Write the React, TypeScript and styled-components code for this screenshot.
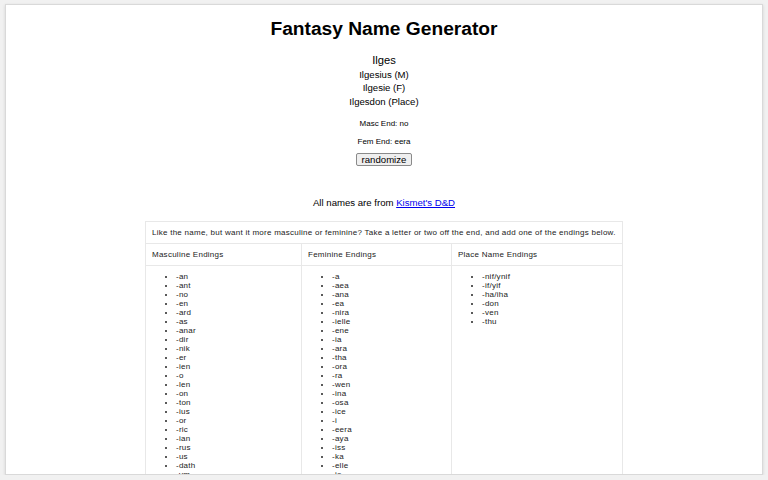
import React from "react";
import styled, { createGlobalStyle } from "styled-components";

const GlobalStyle = createGlobalStyle`
  html, body {
    margin: 0;
    padding: 0;
    background: #f1f1f1;
    font-family: "Liberation Sans", Arial, sans-serif;
    color: #000;
  }
`;

const Page = styled.div`
  padding: 4px 5px 0 5px;
`;

const Panel = styled.main`
  height: 469px;
  background: #fff;
  border: 1px solid #d9d9d9;
  box-shadow: 0 1px 3px rgba(0, 0, 0, 0.12);
  overflow: hidden;
  display: flex;
  flex-direction: column;
  align-items: center;
`;

const Title = styled.h1`
  margin: 13px 0 0 0;
  font-size: 19.2px;
  line-height: 22px;
  font-weight: bold;
`;

const BaseName = styled.h3`
  margin: 12.6px 0 1.4px 0;
  font-size: 11.2px;
  line-height: 14px;
  font-weight: normal;
`;

const Variant = styled.div`
  font-size: 9.6px;
  line-height: 13.5px;
`;

const EndNote = styled.p<{ $top: number }>`
  margin: ${(p) => p.$top}px 0 0 0;
  font-size: 8px;
  line-height: 9px;
`;

const RandomButton = styled.button`
  margin-top: 7px;
  font-family: "Liberation Sans", Arial, sans-serif;
  font-size: 9.6px;
  line-height: 11.5px;
  padding: 0 5px;
  color: #000;
  background: #efefef;
  border: 1px solid #8a8a8a;
  border-radius: 2px;
`;

const Credit = styled.p`
  margin: 31px 0 0 0;
  font-size: 9.6px;
  line-height: 11px;

  a {
    color: #0000ee;
    text-decoration: underline;
  }
`;

const EndingsTable = styled.table`
  margin-top: 12.7px;
  width: 477px;
  table-layout: fixed;
  border-collapse: collapse;
  font-size: 8px;
  line-height: 9px;
  letter-spacing: 0.26px;
  color: #222;

  td {
    border: 1px solid #e8e8e8;
    padding: 6px;
    vertical-align: top;
  }
`;

const IntroCell = styled.td`
  white-space: nowrap;
`;

const EndingList = styled.ul`
  margin: 0;
  padding-left: 24px;
  list-style: disc;

  li {
    line-height: 9px;
  }
`;

const masculine = [
  "-an", "-ant", "-no", "-en", "-ard", "-as", "-anar", "-dir", "-nik", "-er",
  "-ien", "-o", "-len", "-on", "-ton", "-ius", "-or", "-ric", "-ian", "-rus",
  "-us", "-dath", "-ym",
];

const feminine = [
  "-a", "-aea", "-ana", "-ea", "-nira", "-ielle", "-ene", "-ia", "-ara", "-tha",
  "-ora", "-ra", "-wen", "-ina", "-osa", "-ice", "-i", "-eera", "-aya", "-iss",
  "-ka", "-elle", "-ie",
];

const place = ["-nif/ynif", "-if/yif", "-ha/iha", "-don", "-ven", "-thu"];

const App = () => {
  return (
    <Page>
      <GlobalStyle />
      <Panel>
        <Title>Fantasy Name Generator</Title>
        <BaseName>Ilges</BaseName>
        <Variant>Ilgesius (M)</Variant>
        <Variant>Ilgesie (F)</Variant>
        <Variant>Ilgesdon (Place)</Variant>
        <EndNote $top={11}>Masc End: no</EndNote>
        <EndNote $top={8.5}>Fem End: eera</EndNote>
        <RandomButton>randomize</RandomButton>
        <Credit>
          All names are from <a href="#">Kismet's D&amp;D</a>
        </Credit>
        <EndingsTable>
          <colgroup>
            <col style={{ width: 156 }} />
            <col style={{ width: 150 }} />
            <col style={{ width: 171 }} />
          </colgroup>
          <tbody>
            <tr>
              <IntroCell colSpan={3}>
                Like the name, but want it more masculine or feminine? Take a
                letter or two off the end, and add one of the endings below.
              </IntroCell>
            </tr>
            <tr>
              <td>Masculine Endings</td>
              <td>Feminine Endings</td>
              <td>Place Name Endings</td>
            </tr>
            <tr>
              <td>
                <EndingList>
                  {masculine.map((e) => (
                    <li key={e}>{e}</li>
                  ))}
                </EndingList>
              </td>
              <td>
                <EndingList>
                  {feminine.map((e) => (
                    <li key={e}>{e}</li>
                  ))}
                </EndingList>
              </td>
              <td>
                <EndingList>
                  {place.map((e) => (
                    <li key={e}>{e}</li>
                  ))}
                </EndingList>
              </td>
            </tr>
          </tbody>
        </EndingsTable>
      </Panel>
    </Page>
  );
};

export default App;
